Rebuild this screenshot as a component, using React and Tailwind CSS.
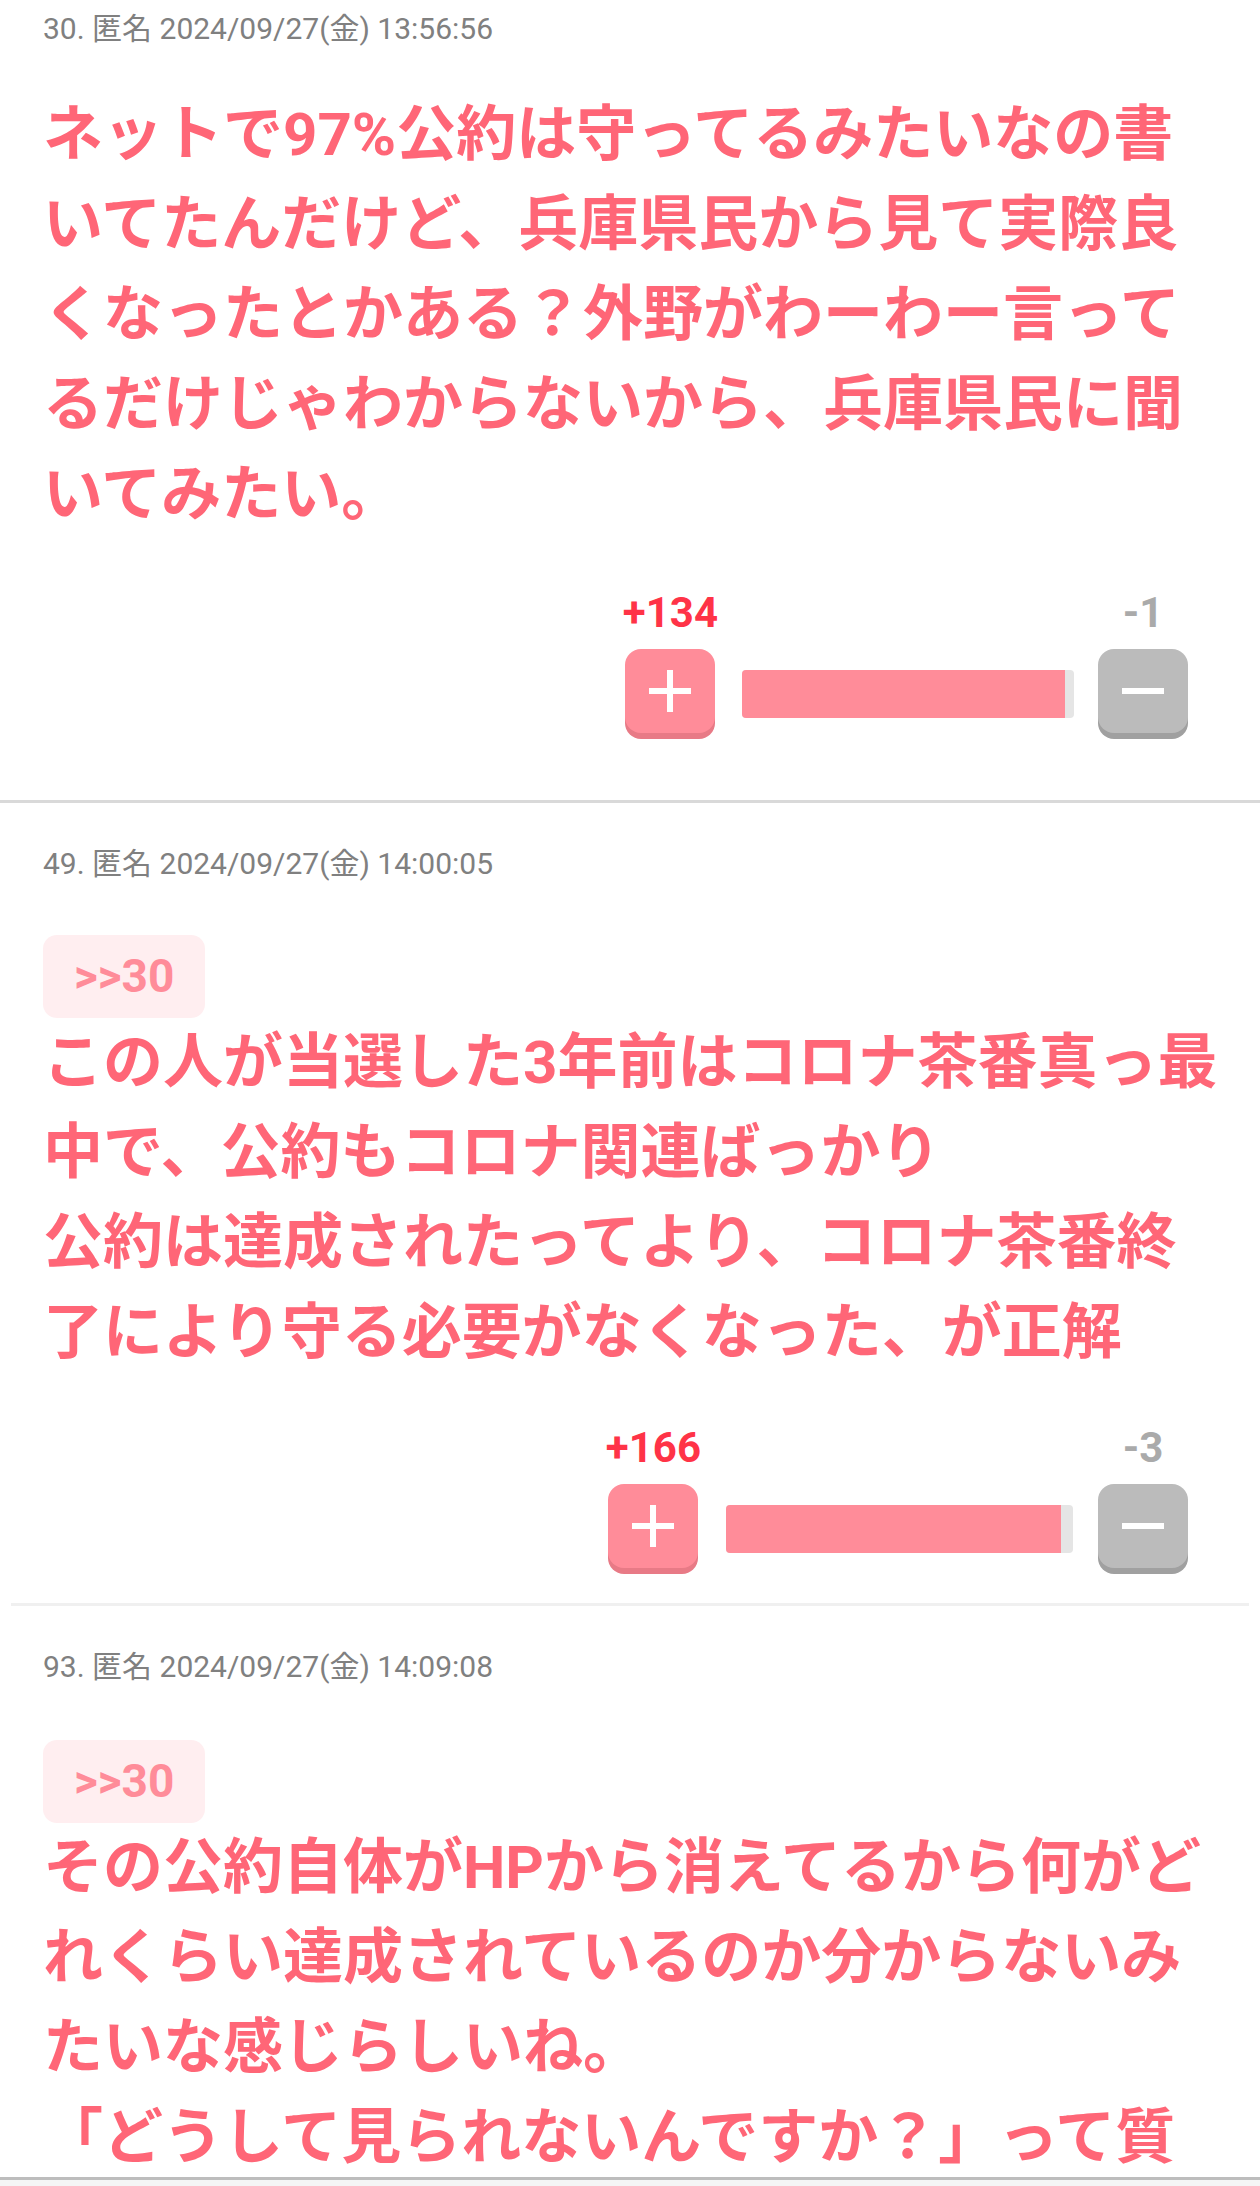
import React from "react";

const comments = [
  {
    no: 30,
    date: "2024/09/27(金) 13:56:56",
    body: "ネットで97%公約は守ってるみたいなの書いてたんだけど、兵庫県民から見て実際良くなったとかある？外野がわーわー言ってるだけじゃわからないから、兵庫県民に聞いてみたい。",
    plus: 134,
    minus: 1,
    barWidth: 332,
    fillWidth: 323,
    gap: "gap-x-[24px]",
    top: "pt-[6px]",
    bodyTop: "mt-[39px]",
    voteTop: "mt-[48px]",
    bottom: "pb-[61px]",
  },
  {
    no: 49,
    date: "2024/09/27(金) 14:00:05",
    anchor: 30,
    body: "この人が当選した3年前はコロナ茶番真っ最中で、公約もコロナ関連ばっかり\n公約は達成されたってより、コロナ茶番終了により守る必要がなくなった、が正解",
    plus: 166,
    minus: 3,
    barWidth: 347,
    fillWidth: 335,
    gap: "gap-x-[25px]",
    top: "pt-[38px]",
    badgeTop: "mt-[49px]",
    voteTop: "mt-[45px]",
    bottom: "pb-[29px]",
  },
  {
    no: 93,
    date: "2024/09/27(金) 14:09:08",
    anchor: 30,
    body: "その公約自体がHPから消えてるから何がどれくらい達成されているのか分からないみたいな感じらしいね。\n「どうして見られないんですか？」って質問したら、まだ準備中ですって言われたらしい",
    top: "pt-[38px]",
    badgeTop: "mt-[51px]",
  },
];

// plus / minus drawn with square ends like the original buttons
const PlusIcon = () => (
  <svg width="42" height="42" viewBox="0 0 42 42">
    <rect x="18" y="0" width="6" height="42" fill="#fff" />
    <rect x="0" y="18" width="42" height="6" fill="#fff" />
  </svg>
);

const MinusIcon = () => (
  <svg width="42" height="42" viewBox="0 0 42 42">
    <rect x="0" y="18" width="42" height="6" fill="#fff" />
  </svg>
);

const Votes = ({ c }) => (
  <div className={`flex items-end justify-end pr-[72px] ${c.gap} ${c.voteTop}`}>
    <div className="flex flex-col items-center">
      <span className="mb-[11px] h-[50px] text-[42px] font-bold leading-[50px] text-[#ff3347]">
        +{c.plus}
      </span>
      <button className="mb-[6px] flex h-[84px] w-[90px] items-center justify-center rounded-[16px] bg-[#ff8c99] shadow-[0_6px_0_#e87a86]">
        <PlusIcon />
      </button>
    </div>

    <div
      className="mb-[21px] h-[48px] overflow-hidden rounded-[4px] bg-[#e5e5e5]"
      style={{ width: c.barWidth }}>
      <div className="h-full bg-[#ff8c99]" style={{ width: c.fillWidth }} />
    </div>

    <div className="flex flex-col items-center">
      <span className="mb-[11px] h-[50px] text-[42px] font-bold leading-[50px] text-[#aaaaaa]">
        -{c.minus}
      </span>
      <button className="mb-[6px] flex h-[84px] w-[90px] items-center justify-center rounded-[16px] bg-[#bbbbbb] shadow-[0_6px_0_#a0a0a0]">
        <MinusIcon />
      </button>
    </div>
  </div>
);

const Comment = ({ c }) => (
  <div className={`${c.top} ${c.bottom || ""}`}>
    <div className="pl-[43px] text-[30px] leading-[45px] text-[#808080]">
      {c.no}. 匿名 {c.date}
    </div>

    {c.anchor && (
      <div className={`pl-[43px] ${c.badgeTop}`}>
        <span className="inline-block rounded-[14px] bg-[#ffeef0] px-[31px] py-[10px] text-[46px] font-bold leading-[63px] text-[#ff8c99]">
          &gt;&gt;{c.anchor}
        </span>
      </div>
    )}

    <p
      className={`whitespace-pre-line pl-[43px] pr-[36px] text-[60px] font-bold leading-[90px] text-[#ff6677] ${
        c.anchor ? "" : c.bodyTop
      }`}>
      {c.body}
    </p>

    {c.plus !== undefined && <Votes c={c} />}
  </div>
);

export default function App() {
  return (
    <div
      className="flex h-[2186px] flex-col overflow-hidden bg-white"
      style={{ fontFamily: "Roboto, 'Noto Sans CJK JP', sans-serif" }}>
      <main className="min-h-0 flex-1 overflow-hidden">
        <Comment c={comments[0]} />
        <div className="h-[3px] bg-[#d9d9d9]" />
        <Comment c={comments[1]} />
        <div className="mx-[11px] h-[3px] bg-[#f0f0f0]" />
        <Comment c={comments[2]} />
      </main>

      {/* bottom toolbar edge */}
      <footer className="h-[9px] border-t-[3px] border-[#bdbdbd] bg-[#f5f5f5]" />
    </div>
  );
}
